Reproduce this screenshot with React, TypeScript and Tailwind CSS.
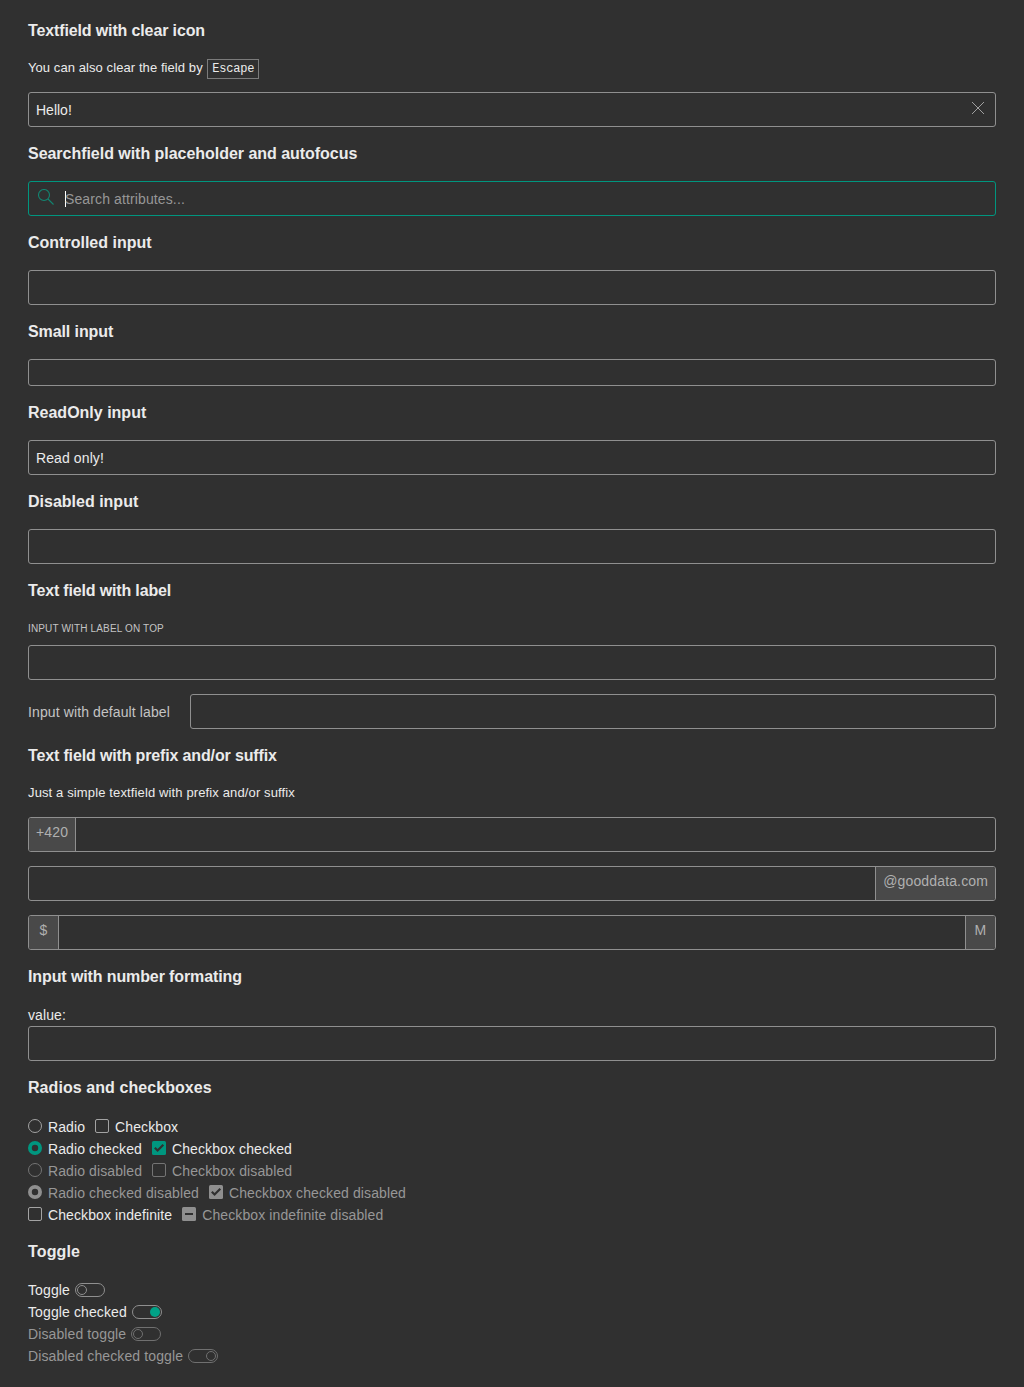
import React from "react";

function Heading({ children, spacing = "" }: { children: React.ReactNode; spacing?: string }) {
  return <h4 className={`h-[54px] text-base leading-[54px] font-bold text-[#ebebeb] ${spacing}`}>{children}</h4>;
}

const field =
  "block h-[35px] w-full min-w-0 rounded-[3px] border border-[#8f8f8f] bg-transparent px-[7px] text-sm text-[#ebebeb] outline-none";

type FieldProps = { value?: string; label: string; disabled?: boolean; spacing?: string };

function Field({ value, label, disabled, spacing = "" }: FieldProps) {
  return <input className={`${field} ${spacing}`} aria-label={label} defaultValue={value} disabled={disabled} />;
}

function Affix({ prefix, suffix }: { prefix?: string; suffix?: string }) {
  return (
    <div className="flex h-[35px] overflow-hidden rounded-[3px] border border-[#8f8f8f] text-sm leading-[28px] tracking-[0.14px] text-[#b0b0b0]">
      {prefix && (
        <span className="min-w-[30px] border-r border-[#8f8f8f] bg-[#494949] px-[7px] text-center">{prefix}</span>
      )}
      <input className="min-w-0 flex-1 bg-transparent px-[7px] text-[#ebebeb] outline-none" aria-label="Amount" />
      {suffix && (
        <span className="min-w-[30px] border-l border-[#8f8f8f] bg-[#494949] px-[7px] text-center">{suffix}</span>
      )}
    </div>
  );
}

type ChoiceProps = { kind: "radio" | "check"; state?: "off" | "on" | "mixed"; disabled?: boolean; label: string };

function Choice({ kind, state = "off", disabled, label }: ChoiceProps) {
  const color = disabled ? "#8f8f8f" : "#00967f";
  const outline = disabled ? "#747474" : "#a3a3a3";
  return (
    <label className={disabled ? "flex h-[22px] text-[#979797]" : "flex h-[22px] text-[#ebebeb]"}>
      <svg width="14" height="14" viewBox="0 0 14 14" className="mt-1 mr-1.5 shrink-0" fill="none">
        {kind === "radio" && state === "off" && <circle cx="7" cy="7" r="6.5" stroke={outline} />}
        {kind === "radio" && state === "on" && <circle cx="7" cy="7" r="5.1" stroke={color} strokeWidth="3.8" />}
        {kind === "check" && state === "off" && <rect x="0.5" y="0.5" width="13" height="13" rx="1.5" stroke={outline} />}
        {kind === "check" && state !== "off" && <rect width="14" height="14" rx="1.5" fill={color} />}
        {kind === "check" && state === "on" && <path d="M2.8 6.7 5.6 9.5 11.3 3.8" stroke="#303030" strokeWidth="2.2" />}
        {state === "mixed" && <path d="M3 7h8" stroke="#303030" strokeWidth="2" />}
      </svg>
      <span className="pt-px tracking-[0.105px]">{label}</span>
    </label>
  );
}

function Toggle({ label, on, disabled }: { label: string; on?: boolean; disabled?: boolean }) {
  const stroke = disabled ? "#707070" : "#8f8f8f";
  const filled = on && !disabled;
  return (
    <label className={disabled ? "flex h-[22px] text-[#979797]" : "flex h-[22px] text-[#ebebeb]"}>
      <span className="tracking-[0.11px]">{label}</span>
      <svg width="30" height="14" viewBox="0 0 30 14" fill="none" className="mt-1 ml-[5px]">
        <rect x="0.5" y="0.5" width="29" height="13" rx="6.5" stroke={stroke} />
        <circle
          cx={on ? 23 : 7}
          cy="7"
          r={filled ? 5 : 4.5}
          fill={filled ? "#00a287" : "none"}
          stroke={filled ? "none" : stroke}
        />
      </svg>
    </label>
  );
}

export default function App() {
  return (
    <main className="h-[1387px] bg-[#303030] px-7 pt-1 font-['Liberation_Sans',Arial,sans-serif] text-sm leading-[22px] text-[#ebebeb]">
      <Heading spacing="tracking-[-0.13px]">Textfield with clear icon</Heading>
      <p className="mb-3.5 h-5 text-[13px] leading-5 tracking-[0.08px]">
        You can also clear the field by{" "}
        <kbd className="mt-px ml-[0.7px] inline-block h-5 w-[52px] border border-[#7b7b7b] px-1 align-top font-['Liberation_Mono',monospace] text-[12px] leading-[18px] tracking-[-0.2px]">
          Escape
        </kbd>
      </p>
      <div className="relative">
        <Field value="Hello!" label="Greeting" />
        <svg className="absolute top-[10px] right-3 h-3 w-3" viewBox="0 0 12 12" stroke="#a0a0a0">
          <path d="M0 0 12 12M12 0 0 12" />
        </svg>
      </div>
      <Heading spacing="tracking-[-0.035px]">Searchfield with placeholder and autofocus</Heading>
      <div className="flex h-[35px] items-start rounded-[3px] border border-[#00967f]">
        <svg className="mt-[7px] ml-[9px] h-4 w-4" viewBox="0 0 16 16" fill="none" stroke="#128571" strokeWidth="1.1">
          <circle cx="6" cy="6" r="5.5" />
          <path d="m10 10 5.5 5.5" />
        </svg>
        <span className="mt-[9px] ml-[11px] -mr-px h-4 w-px bg-white" />
        <span className="leading-[35px] tracking-[0.12px] text-[#979797]">Search attributes...</span>
      </div>
      <Heading>Controlled input</Heading>
      <Field label="Controlled input" />
      <Heading spacing="tracking-[-0.1px]">Small input</Heading>
      <input
        aria-label="Small input"
        className="block h-[27px] w-full rounded-[3px] border border-[#8f8f8f] px-[7px] outline-none"
      />
      <Heading>ReadOnly input</Heading>
      <Field value="Read only!" label="ReadOnly input" spacing="tracking-[0.1px]" />
      <Heading>Disabled input</Heading>
      <Field label="Disabled input" disabled />
      <Heading spacing="tracking-[-0.16px]">Text field with label</Heading>
      <label className="block h-[27px] text-[10px] leading-[21px] tracking-[0.15px] text-[#c4c4c4] uppercase">
        Input with label on top
      </label>
      <Field label="Input with label on top" />
      <div className="mt-3.5 flex h-[35px]">
        <label className="w-[162px] shrink-0 leading-[36px] tracking-[0.11px] text-[#c4c4c4]">Input with default label</label>
        <Field label="Input with default label" />
      </div>
      <Heading spacing="tracking-[-0.145px]">Text field with prefix and/or suffix</Heading>
      <p className="mb-3.5 h-5 text-[13px] leading-5 tracking-[0.13px]">Just a simple textfield with prefix and/or suffix</p>
      <div className="flex flex-col gap-3.5">
        <Affix prefix="+420" />
        <Affix suffix="@gooddata.com" />
        <Affix prefix="$" suffix="M" />
      </div>
      <Heading spacing="tracking-[-0.11px]">Input with number formating</Heading>
      <div className="tracking-[0.1px]">value:</div>
      <Field label="Formatted number" />
      <Heading spacing="tracking-[0.07px]">Radios and checkboxes</Heading>
      <div className="flex gap-2.5">
        <Choice kind="radio" label="Radio" />
        <Choice kind="check" label="Checkbox" />
      </div>
      <div className="flex gap-2.5">
        <Choice kind="radio" state="on" label="Radio checked" />
        <Choice kind="check" state="on" label="Checkbox checked" />
      </div>
      <div className="flex gap-2.5">
        <Choice kind="radio" disabled label="Radio disabled" />
        <Choice kind="check" disabled label="Checkbox disabled" />
      </div>
      <div className="flex gap-2.5">
        <Choice kind="radio" state="on" disabled label="Radio checked disabled" />
        <Choice kind="check" state="on" disabled label="Checkbox checked disabled" />
      </div>
      <div className="flex gap-2.5">
        <Choice kind="check" label="Checkbox indefinite" />
        <Choice kind="check" state="mixed" disabled label="Checkbox indefinite disabled" />
      </div>
      <Heading spacing="tracking-[0.15px]">Toggle</Heading>
      <Toggle label="Toggle" />
      <Toggle label="Toggle checked" on />
      <Toggle label="Disabled toggle" disabled />
      <Toggle label="Disabled checked toggle" on disabled />
    </main>
  );
}
